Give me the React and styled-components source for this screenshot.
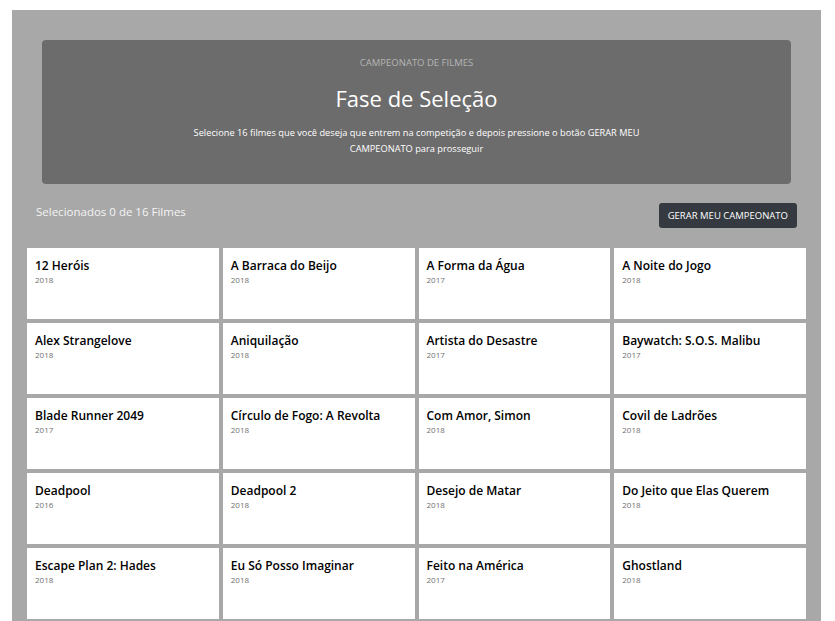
import React from "react";
import styled, { createGlobalStyle } from "styled-components";

const movies = [
  ["12 Heróis", 2018],
  ["A Barraca do Beijo", 2018],
  ["A Forma da Água", 2017],
  ["A Noite do Jogo", 2018],
  ["Alex Strangelove", 2018],
  ["Aniquilação", 2018],
  ["Artista do Desastre", 2017],
  ["Baywatch: S.O.S. Malibu", 2017],
  ["Blade Runner 2049", 2017],
  ["Círculo de Fogo: A Revolta", 2018],
  ["Com Amor, Simon", 2018],
  ["Covil de Ladrões", 2018],
  ["Deadpool", 2016],
  ["Deadpool 2", 2018],
  ["Desejo de Matar", 2018],
  ["Do Jeito que Elas Querem", 2018],
  ["Escape Plan 2: Hades", 2018],
  ["Eu Só Posso Imaginar", 2018],
  ["Feito na América", 2017],
  ["Ghostland", 2018],
];

function App() {
  return (
    <>
      <GlobalStyle />
      <Page>
        <Header>
          <Kicker>CAMPEONATO DE FILMES</Kicker>
          <Title>Fase de Seleção</Title>
          <Lead>
            Selecione 16 filmes que você deseja que entrem na competição e depois
            pressione o botão GERAR MEU CAMPEONATO para prosseguir
          </Lead>
        </Header>
        <Toolbar>
          <Counter>Selecionados 0 de 16 Filmes</Counter>
          <Button type="button">GERAR MEU CAMPEONATO</Button>
        </Toolbar>
        <Grid>
          {movies.map(([title, year]) => (
            <Card key={title}>
              <CardTitle>{title}</CardTitle>
              <Year>{year}</Year>
            </Card>
          ))}
        </Grid>
      </Page>
    </>
  );
}

export default App;

const GlobalStyle = createGlobalStyle`
  body {
    margin: 0;
    background: #ffffff;
    font-family: "Open Sans", "Noto Sans", sans-serif;
  }
`;

const Page = styled.div`
  margin: 10px 14px 0 12px;
  padding: 30px 15px 15px 15px;
  background: #a8a8a8;
`;

const Header = styled.header`
  margin: 0 15px;
  height: 144px;
  box-sizing: border-box;
  padding: 17px 0 0 0;
  background: #6c6c6c;
  border-radius: 4px;
  text-align: center;
  color: #ffffff;
`;

const Kicker = styled.div`
  font-size: 9.5px;
  line-height: 12px;
  color: #b4b4b4;
`;

const Title = styled.h1`
  margin: 14px 0 0 0;
  font-size: 22px;
  line-height: 30px;
  font-weight: 400;
`;

const Lead = styled.p`
  width: 450px;
  margin: 12px auto 0 auto;
  font-size: 9.25px;
  line-height: 16px;
`;

const Toolbar = styled.div`
  display: flex;
  justify-content: space-between;
  align-items: flex-start;
  height: 64px;
  box-sizing: border-box;
  padding: 19px 9px 0 9px;
`;

const Counter = styled.span`
  margin-top: 1px;
  font-size: 11.5px;
  line-height: 16px;
  color: #f4f4f4;
`;

const Button = styled.button`
  height: 25px;
  padding: 0 9px;
  border: none;
  border-radius: 3px;
  background: #343a40;
  color: #ffffff;
  font-family: inherit;
  font-size: 9.5px;
`;

const Grid = styled.div`
  display: grid;
  grid-template-columns: repeat(4, 1fr);
  gap: 4px;
`;

const Card = styled.div`
  height: 71px;
  box-sizing: border-box;
  padding: 10px 8px;
  background: #ffffff;
`;

const CardTitle = styled.div`
  font-size: 12px;
  line-height: 16px;
  font-weight: 600;
  color: #000000;
`;

const Year = styled.div`
  font-size: 8px;
  line-height: 11px;
  color: #6f6f6f;
`;
